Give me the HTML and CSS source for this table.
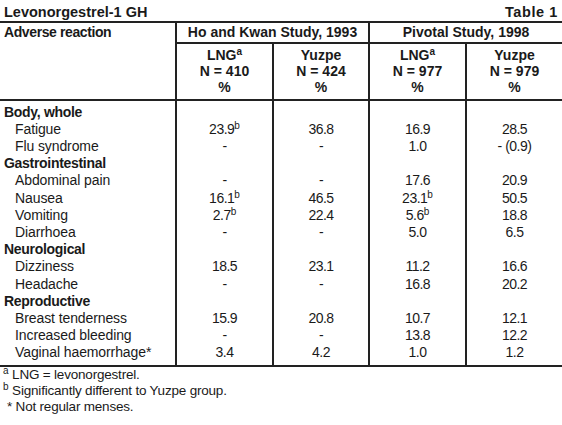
FILE: index.html
```html
<!DOCTYPE html>
<html lang="en">
<head>
    <meta charset="UTF-8">
    <title>Levonorgestrel-1 GH</title>
    <link rel="stylesheet" href="styles.css">
</head>
<body>
    <div class="sheet">
        <div class="caption">
            <span>Levonorgestrel-1 GH</span>
            <span>Table 1</span>
        </div>

        <table class="data">
            <colgroup>
                <col class="c-label">
                <col class="c-val">
                <col class="c-val2">
                <col class="c-val">
                <col class="c-val2">
            </colgroup>
            <thead>
                <tr class="group">
                    <th class="label" rowspan="2">Adverse reaction</th>
                    <th colspan="2" class="sep">Ho and Kwan Study, 1993</th>
                    <th colspan="2" class="sep">Pivotal Study, 1998</th>
                </tr>
                <tr class="sub">
                    <th class="sep">LNG<sup>a</sup><br>N = 410<br>%</th>
                    <th class="sep">Yuzpe<br>N = 424<br>%</th>
                    <th class="sep">LNG<sup>a</sup><br>N = 977<br>%</th>
                    <th class="sep">Yuzpe<br>N = 979<br>%</th>
                </tr>
            </thead>
            <tbody>
                <tr class="cat"><td>Body, whole</td><td></td><td></td><td></td><td></td></tr>
                <tr><td>Fatigue</td><td>23.9<sup>b</sup></td><td>36.8</td><td>16.9</td><td>28.5</td></tr>
                <tr><td>Flu syndrome</td><td>-</td><td>-</td><td>1.0</td><td>- (0.9)</td></tr>
                <tr class="cat"><td>Gastrointestinal</td><td></td><td></td><td></td><td></td></tr>
                <tr><td>Abdominal pain</td><td>-</td><td>-</td><td>17.6</td><td>20.9</td></tr>
                <tr><td>Nausea</td><td>16.1<sup>b</sup></td><td>46.5</td><td>23.1<sup>b</sup></td><td>50.5</td></tr>
                <tr><td>Vomiting</td><td>2.7<sup>b</sup></td><td>22.4</td><td>5.6<sup>b</sup></td><td>18.8</td></tr>
                <tr><td>Diarrhoea</td><td>-</td><td>-</td><td>5.0</td><td>6.5</td></tr>
                <tr class="cat"><td>Neurological</td><td></td><td></td><td></td><td></td></tr>
                <tr><td>Dizziness</td><td>18.5</td><td>23.1</td><td>11.2</td><td>16.6</td></tr>
                <tr><td>Headache</td><td>-</td><td>-</td><td>16.8</td><td>20.2</td></tr>
                <tr class="cat"><td>Reproductive</td><td></td><td></td><td></td><td></td></tr>
                <tr><td>Breast tenderness</td><td>15.9</td><td>20.8</td><td>10.7</td><td>12.1</td></tr>
                <tr><td>Increased bleeding</td><td>-</td><td>-</td><td>13.8</td><td>12.2</td></tr>
                <tr><td>Vaginal haemorrhage*</td><td>3.4</td><td>4.2</td><td>1.0</td><td>1.2</td></tr>
            </tbody>
        </table>

        <div class="notes">
            <p><sup>a</sup> LNG = levonorgestrel.</p>
            <p><sup>b</sup> Significantly different to Yuzpe group.</p>
            <p class="star">* Not regular menses.</p>
        </div>
    </div>
</body>
</html>
```

FILE: styles.css
```css
body {
    margin: 0;
    background: #fff;
    color: #1a1a1a;
    font-family: "Liberation Sans Narrow", "Liberation Sans", Arial, sans-serif;
    font-size: 14px;
}
.sheet {
    width: 562px;
}
.caption {
    display: flex;
    justify-content: space-between;
    padding: 3px 4px 0 4px;
    height: 18px;
    font-weight: bold;
    font-size: 14.5px;
    line-height: 18px;
    border-bottom: 2px solid #222;
}
.caption span:last-child {
    letter-spacing: 0.6px;
}
.data {
    width: 562px;
    border-collapse: collapse;
    table-layout: fixed;
}
.c-label {
    width: 176px;
}
.c-val {
    width: 97px;
}
.c-val2 {
    width: 96px;
}
th, td {
    padding: 0;
}
th {
    font-weight: bold;
}
.group th {
    height: 19px;
    line-height: 18px;
    text-align: center;
    border-bottom: 2px solid #222;
    vertical-align: top;
}
.group th.label {
    text-align: left;
    padding-left: 4px;
    letter-spacing: -0.4px;
}
.sep {
    border-left: 2px solid #222;
}
.sub th {
    line-height: 16px;
    text-align: center;
    padding: 3px 0 4px;
    vertical-align: top;
}
.data thead {
    border-bottom: 2px solid #222;
}
.data tbody {
    border-bottom: 2px solid #222;
}
tbody td {
    height: 17.2px;
    line-height: 17.2px;
    text-align: center;
    border-left: 2px solid #222;
    letter-spacing: -0.5px;
}
tbody tr:first-child td {
    padding-top: 2.5px;
}
tbody tr:last-child td {
    padding-bottom: 3.5px;
}
tbody td:first-child {
    text-align: left;
    padding-left: 15px;
    border-left: none;
    letter-spacing: -0.1px;
}
tbody tr.cat td:first-child {
    font-weight: bold;
    padding-left: 4px;
    letter-spacing: -0.3px;
}
sup {
    font-size: 10px;
    line-height: 0;
    vertical-align: 5px;
    letter-spacing: 0;
}
.notes {
    padding: 0 0 0 3px;
    font-size: 13.5px;
    letter-spacing: -0.2px;
}
.notes p {
    margin: 0;
    line-height: 16px;
}
.notes p.star {
    padding-left: 4px;
}
```
